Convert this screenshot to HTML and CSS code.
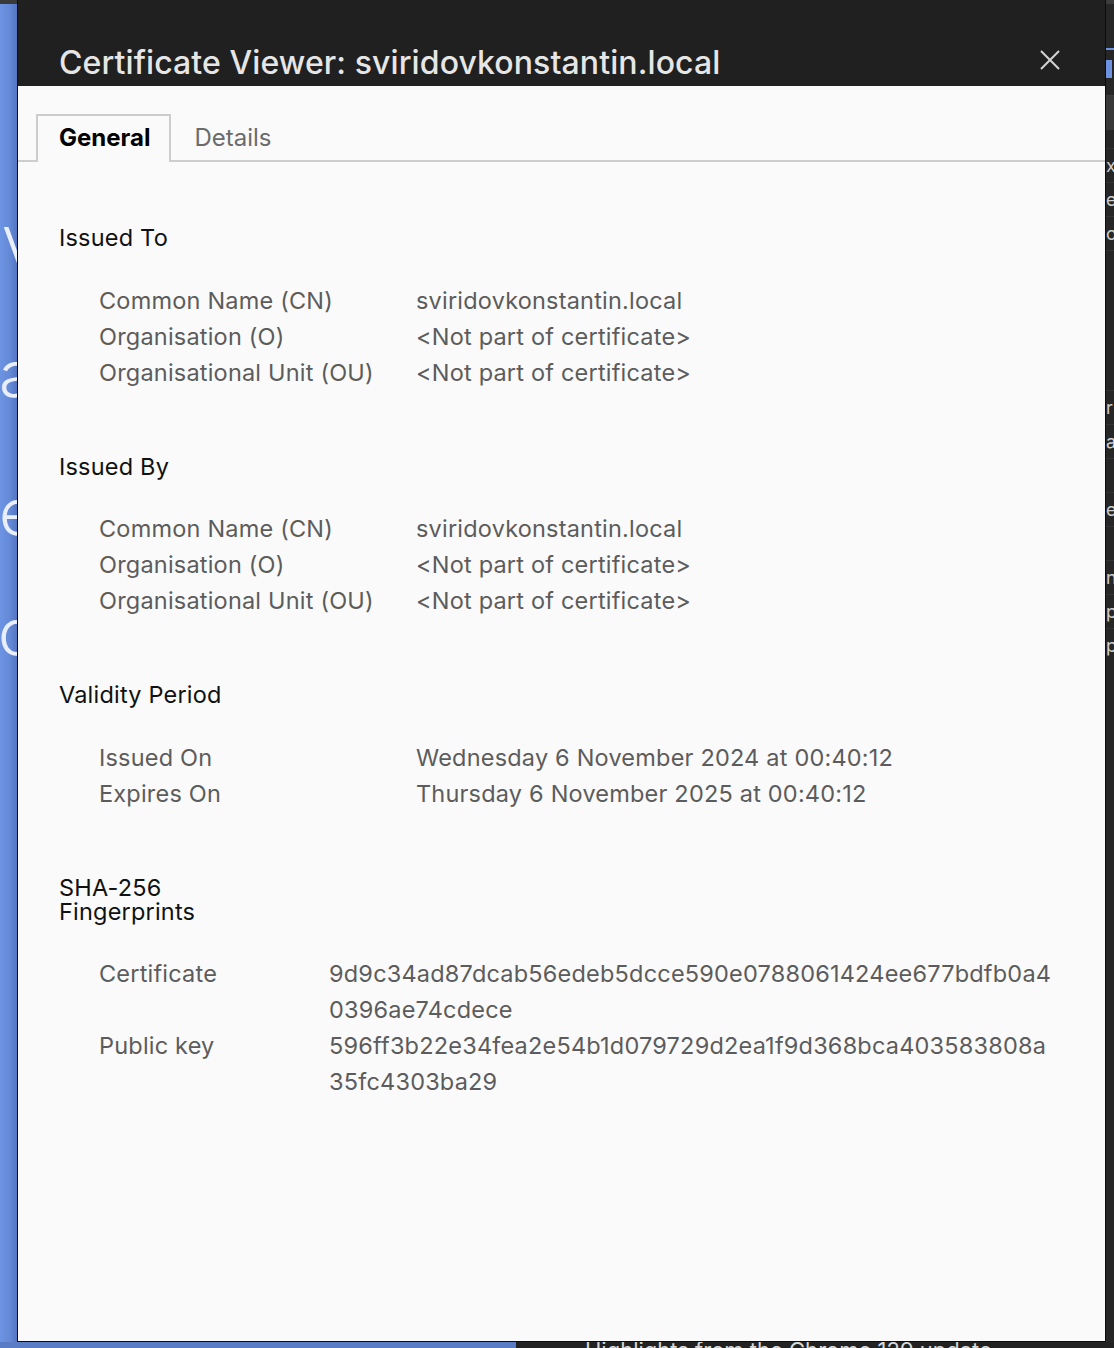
FILE: index.html
```html
<!DOCTYPE html>
<html lang="en">
<head>
<meta charset="utf-8">
<title>Certificate Viewer</title>
<link rel="stylesheet" href="styles.css">
</head>
<body>
<div class="screen">
  <div class="main">
    <div class="left-strip">
      <span class="bg-letter l-v">V</span>
      <span class="bg-letter l-a">a</span>
      <span class="bg-letter l-e">e</span>
      <span class="bg-letter l-o">o</span>
    </div>
    <div class="dialog">
      <header class="titlebar">
        <h1 class="title">Certificate Viewer: sviridovkonstantin.local</h1>
        <button class="close" aria-label="Close">
          <svg width="20" height="20" viewBox="0 0 20 20"><path d="M1 1 L19 19 M19 1 L1 19" stroke="#d4d4d4" stroke-width="2" fill="none"/></svg>
        </button>
      </header>
      <nav class="tabs">
        <div class="tab active">General</div>
        <div class="tab">Details</div>
      </nav>
      <main class="content">
        <section class="section">
          <h2 class="section-title">Issued To</h2>
          <dl class="rows">
            <dt>Common Name (CN)</dt><dd>sviridovkonstantin.local</dd>
            <dt>Organisation (O)</dt><dd>&lt;Not part of certificate&gt;</dd>
            <dt>Organisational Unit (OU)</dt><dd>&lt;Not part of certificate&gt;</dd>
          </dl>
        </section>
        <section class="section">
          <h2 class="section-title">Issued By</h2>
          <dl class="rows">
            <dt>Common Name (CN)</dt><dd>sviridovkonstantin.local</dd>
            <dt>Organisation (O)</dt><dd>&lt;Not part of certificate&gt;</dd>
            <dt>Organisational Unit (OU)</dt><dd>&lt;Not part of certificate&gt;</dd>
          </dl>
        </section>
        <section class="section">
          <h2 class="section-title">Validity Period</h2>
          <dl class="rows">
            <dt>Issued On</dt><dd>Wednesday 6 November 2024 at 00:40:12</dd>
            <dt>Expires On</dt><dd>Thursday 6 November 2025 at 00:40:12</dd>
          </dl>
        </section>
        <section class="section">
          <h2 class="section-title">SHA-256 Fingerprints</h2>
          <dl class="rows fp">
            <dt>Certificate</dt><dd>9d9c34ad87dcab56edeb5dcce590e0788061424ee677bdfb0a40396ae74cdece</dd>
            <dt>Public key</dt><dd>596ff3b22e34fea2e54b1d079729d2ea1f9d368bca403583808a35fc4303ba29</dd>
          </dl>
        </section>
      </main>
    </div>
    <div class="right-strip">
      <div class="rs-top"></div>
      <div class="rs-dark"></div>
      <div class="rs-line"></div>
      <div class="rs-gap"></div>
      <div class="rs-blue"></div>
      <div class="rs-gap2"></div>
      <div class="rs-gray"></div>
      <div class="rs-letters">
        <span>x</span><span>e</span><span>o</span><span class="sp"></span><span>r</span><span>a</span><span class="sp2"></span><span>e</span><span class="sp2"></span><span>n</span><span>p</span><span>p</span>
      </div>
    </div>
  </div>
  <div class="bottom-strip">
    <div class="bottom-left"></div>
    <div class="bottom-right"><span class="bottom-text">Highlights from the Chrome 129 update</span></div>
  </div>
</div>
</body>
</html>
```

FILE: styles.css
```css
* { box-sizing: border-box; }

body {
  margin: 0;
  width: 1114px;
  height: 1348px;
  overflow: hidden;
  background: #222222;
  font-family: Inter, "Noto Sans", "Liberation Sans", sans-serif;
}

.screen {
  display: flex;
  flex-direction: column;
  height: 1348px;
}

.main {
  display: flex;
  height: 1342px;
}

/* ---------- background strips ---------- */
.left-strip {
  width: 17px;
  flex: none;
  overflow: hidden;
  border-top: 4px solid #3a3a3a;
  background: linear-gradient(to right, #6d94e2 0%, #6388d6 60%, #5475c2 100%);
  display: flex;
  flex-direction: column;
  padding-top: 215px;
}

.bg-letter {
  display: block;
  font-size: 64px;
  line-height: 64px;
  height: 64px;
  font-weight: 300;
  color: #e9eefb;
  white-space: nowrap;
}
.l-v { margin-left: 2px; }
.l-a { margin-top: 59px; margin-left: -1px; }
.l-e { margin-top: 74px; margin-left: -1px; }
.l-o { margin-top: 56px; margin-left: -2px; }

.right-strip {
  width: 8px;
  flex: none;
  overflow: hidden;
  background: #262626;
  display: flex;
  flex-direction: column;
}
.rs-top { height: 4px; background: #3c3c3c; flex: none; }
.rs-dark { height: 44px; flex: none; }
.rs-line { height: 2px; background: #6d93e0; flex: none; }
.rs-gap { height: 10px; flex: none; }
.rs-blue { height: 18px; width: 6px; background: #6d93e0; flex: none; }
.rs-gap2 { height: 18px; flex: none; border-bottom: 1px solid #3d3d3d; }
.rs-gray { height: 34px; background: #383838; flex: none; }
.rs-letters {
  display: flex;
  flex-direction: column;
  font-size: 18px;
  line-height: 34px;
  color: #cfcfcf;
  padding-top: 18px;
}
.rs-letters span { display: block; height: 34px; border-top: 1px solid #333; }
.rs-letters .sp { height: 140px; }
.rs-letters .sp2 { height: 34px; }

.bottom-strip {
  display: flex;
  height: 6px;
}
.bottom-left {
  width: 516px;
  background: #5a7bc6;
}
.bottom-right {
  flex: 1;
  background: #222222;
  overflow: hidden;
  padding-left: 69px;
}
.bottom-text {
  display: block;
  font-size: 22px;
  line-height: 22px;
  margin-top: -3px;
  color: #d8d8d8;
  white-space: nowrap;
}

/* ---------- dialog ---------- */
.dialog {
  width: 1089px;
  flex: none;
  border: 1px solid #0c0c0c;
  border-top: none;
  background: #fafafa;
  display: flex;
  flex-direction: column;
}

.titlebar {
  height: 86px;
  flex: none;
  background: #202020;
  display: flex;
  justify-content: space-between;
  align-items: flex-start;
  padding: 0 45px 0 41px;
}

.title {
  margin: 0;
  padding-top: 44px;
  font-size: 32px;
  letter-spacing: 0.1px;
  line-height: 38px;
  font-weight: 500;
  color: #e6e6e6;
  white-space: nowrap;
}

.close {
  margin-top: 50px;
  width: 20px;
  height: 20px;
  padding: 0;
  border: none;
  background: none;
  display: flex;
}

/* ---------- tabs ---------- */
.tabs {
  display: flex;
  padding: 28px 0 0 18px;
  border-bottom: 2px solid #cdcdcd;
}

.tab {
  height: 48px;
  margin-bottom: -2px;
  padding: 7px 19px 0 21px;
  border: 2px solid transparent;
  border-bottom: none;
  font-size: 24px;
  line-height: 30px;
  color: #6b6b6b;
}

.tab.active {
  border-color: #cdcdcd;
  background: #fafafa;
  color: #000;
  font-weight: 700;
}

/* ---------- content ---------- */
.content {
  padding: 64px 50px 0 41px;
}

.section + .section {
  margin-top: 64px;
}

.section-title {
  margin: 0;
  max-width: 190px;
  font-size: 23.5px;
  letter-spacing: 0.2px;
  line-height: 24px;
  font-weight: 400;
  color: #111;
}

.rows {
  display: grid;
  grid-template-columns: 317px 1fr;
  margin: 32.5px 0 0 40px;
  font-size: 23.5px;
  letter-spacing: 0.2px;
  line-height: 36px;
  color: #5c5c5c;
}

.rows dt, .rows dd {
  margin: 0;
}

.rows.fp {
  grid-template-columns: 230px 1fr;
}

.rows.fp dd {
  word-break: break-all;
}
```
